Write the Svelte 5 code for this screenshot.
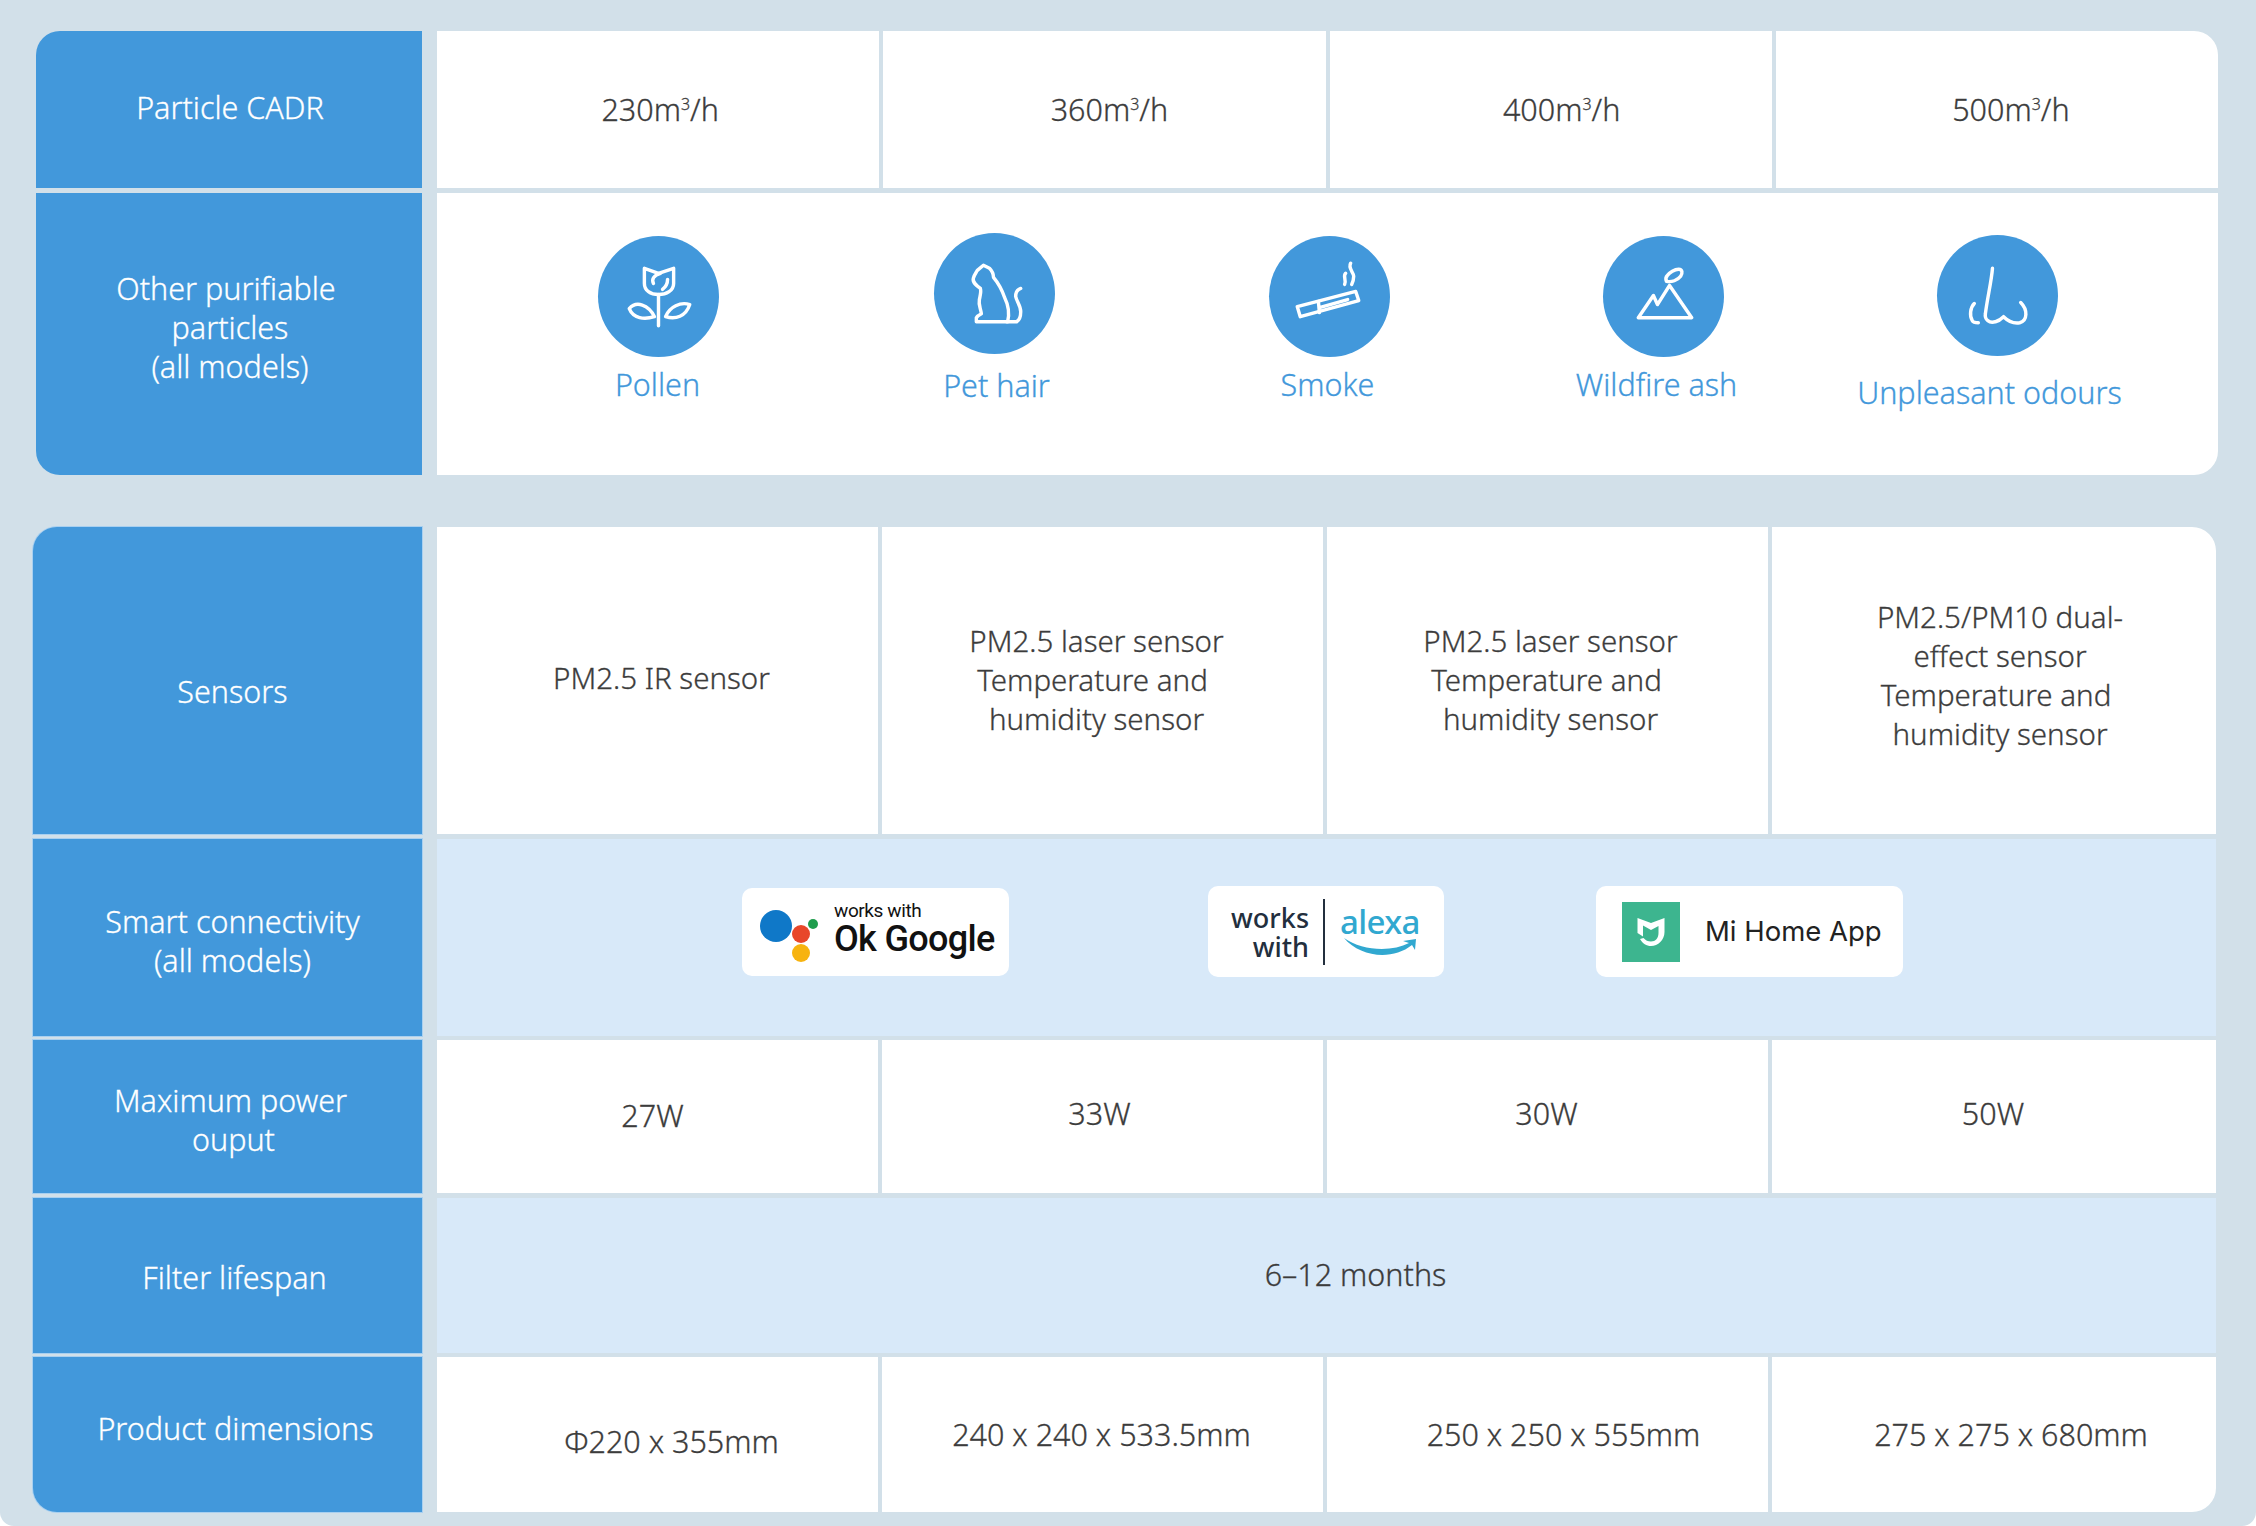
<script>
  // dx / dy keep the slightly uneven text placement of the original comparison chart
  const cadr = [
    { value: '230', dx: 2, dy: 0 },
    { value: '360', dx: 5, dy: 0 },
    { value: '400', dx: 11, dy: 0 },
    { value: '500', dx: 14, dy: 0 },
  ];

  const particles = [
    { name: 'Pollen', icon: 'pollen', iconDx: 0, iconDy: 0, labelDx: -1, labelDy: 0 },
    { name: 'Pet hair', icon: 'cat', iconDx: 3, iconDy: -3, labelDx: 5, labelDy: 1 },
    { name: 'Smoke', icon: 'smoke', iconDx: 5, iconDy: 0, labelDx: 3, labelDy: 0 },
    { name: 'Wildfire ash', icon: 'ash', iconDx: 6, iconDy: 0, labelDx: -1, labelDy: 0 },
    { name: 'Unpleasant odours', icon: 'nose', iconDx: 7, iconDy: -1, labelDx: -1, labelDy: 8 },
  ];

  const sensors = [
    { lines: [['PM2.5 IR sensor', 0]], dx: 4, dy: -3 },
    { lines: [['PM2.5 laser sensor', 0], ['Temperature and', -4], ['humidity sensor', 0]], dx: -6, dy: -1 },
    { lines: [['PM2.5 laser sensor', 2], ['Temperature and', -2], ['humidity sensor', 2]], dx: 1, dy: -1 },
    { lines: [['PM2.5/PM10 dual-', 0], ['effect sensor', 0], ['Temperature and', -4], ['humidity sensor', 0]], dx: 6, dy: -6 },
  ];

  const power = [
    { value: '27W', dx: -5, dy: -1 },
    { value: '33W', dx: -3, dy: -3 },
    { value: '30W', dx: -1, dy: -3 },
    { value: '50W', dx: -1, dy: -3 },
  ];

  const dimensions = [
    { value: 'Φ220 x 355mm', dx: 14, dy: 7 },
    { value: '240 x 240 x 533.5mm', dx: -1, dy: 0 },
    { value: '250 x 250 x 555mm', dx: 16, dy: 0 },
    { value: '275 x 275 x 680mm', dx: 17, dy: 0 },
  ];

  const nudge = (dx, dy) => `translate: ${dx}px ${dy}px`;
</script>

{#snippet rowLabel(lines, dx, dy)}
  <div class="label">
    <div class="text" style={nudge(dx, dy)}>
      {#each lines as [line, lineDx]}
        <span class="line" style={nudge(lineDx, 0)}>{line}</span>
      {/each}
    </div>
  </div>
{/snippet}

{#snippet icon(name)}
  <svg class="glyph" viewBox="0 0 120 120" aria-hidden="true">
    {#if name === 'pollen'}
      <path d="M46 32 L60 37 L75 32 L75 47 C75 54 68 58 60 58 C52 58 46 54 46 47 Z" />
      <path d="M62 37 C55 39 53 43 55 47 M64 53 C68 50 69 47 69 43" />
      <path d="M60 58 V89" />
      <path d="M31 72 C38 64 50 68 56 80 C46 83 35 82 31 72 Z" />
      <path d="M91 68 C82 65 71 70 67 80 C77 83 87 80 91 68 Z" />
    {:else if name === 'cat'}
      <path d="M49 32 L55 35 C58 38 59 41 59 44 C64 50 68 58 70 64 C74 72 75 80 73 88 L42 88 L42 84 C43 82 45 81 47 80 C46 74 44 71 45 66 C46 61 47 58 46 55 C42 52 38 49 39 45 C40 41 42 39 43 37 Z" />
      <path d="M72 88 H82 C85 86 86 82 86 78 C86 72 82 68 81 63 C81 59 83 56 86 55" />
    {:else if name === 'smoke'}
      <path d="M28 70 L86 55 L89 64 L31 80 Z" />
      <path d="M49 65 L50 76 M50 71 L78 63" />
      <path d="M81 27 C78 32 84 36 84 40 C84 43 83 46 82 48" />
      <path d="M76 37 C73 40 77 43 75 48" />
    {:else if name === 'ash'}
      <path d="M66 49 L88 81 L35 81 L50 59 L54 68 Z" />
      <path d="M63 45 C62 43 62 41 64 39 C66 36 71 33 75 33 C79 33 79 37 77 40 C74 44 68 46 63 45 Z" />
    {:else}
      <path d="M55 33 C54 46 50 62 48 78 C47 84 52 88 58 86 C62 85 64 83 66 81 C70 85 76 88 82 87 C90 85 90 74 83 67" />
      <path d="M37 68 C33 72 32 80 35 85 C36 87 39 87 41 87" />
    {/if}
  </svg>
{/snippet}

<main class="page">
  <section class="spec first">
    {@render rowLabel([['Particle CADR', 0]], 1, -2)}
    <div class="cells">
      {#each cadr as c}
        <div class="cell"><div class="text wide" style={nudge(c.dx, c.dy)}>{c.value}m<sup>3</sup>/h</div></div>
      {/each}
    </div>

    {@render rowLabel([['Other purifiable', -4], ['particles', 0], ['(all models)', 0]], 1, -7)}
    <div class="particles">
      {#each particles as p}
        <div class="particle">
          <div class="disc" style={nudge(p.iconDx, p.iconDy)}>{@render icon(p.icon)}</div>
          <span class="pname" style={nudge(p.labelDx, p.labelDy)}>{p.name}</span>
        </div>
      {/each}
    </div>
  </section>

  <section class="spec second">
    {@render rowLabel([['Sensors', 0]], 5, 11)}
    <div class="cells">
      {#each sensors as s}
        <div class="cell">
          <div class="text" style={nudge(s.dx, s.dy)}>
            {#each s.lines as [line, lineDx]}
              <span class="line" style={nudge(lineDx, 0)}>{line}</span>
            {/each}
          </div>
        </div>
      {/each}
    </div>

    {@render rowLabel([['Smart connectivity', 0], ['(all models)', 0]], 5, 4)}
    <div class="cells tinted badges">
      <div class="badge google">
        <svg class="dots" viewBox="0 0 60 60" aria-hidden="true">
          <circle cx="18" cy="22" r="16" fill="#0f78c8" />
          <circle cx="43" cy="30" r="9" fill="#e8472a" />
          <circle cx="43" cy="49" r="9" fill="#f7b30f" />
          <circle cx="55" cy="20" r="5" fill="#1f9d4d" />
        </svg>
        <div class="g-text">
          <span class="g-small">works with</span>
          <span class="g-big">Ok Google</span>
        </div>
      </div>

      <div class="badge alexa">
        <div class="a-works">works<br />with</div>
        <div class="a-rule"></div>
        <div class="a-logo">
          <span class="a-name">alexa</span>
          <svg class="a-smile" viewBox="0 0 76 18" aria-hidden="true">
            <path d="M2 1 C20 14 50 15 67 6 L61 4 L74 2 L73 13 L70 8 C50 24 18 20 2 1 Z" fill="#31a8d0" />
          </svg>
        </div>
      </div>

      <div class="badge mi">
        <svg class="mi-logo" viewBox="0 0 58 60" aria-hidden="true">
          <rect width="58" height="60" fill="#3db58f" />
          <path d="M15.5 16 L29 21 L42.5 16 V30 C42.5 38 36 44 29 44 C24.5 44 20.5 41.5 18 37 L21.5 36 C23.5 38.5 26 39.5 29 39.5 C33.5 39.5 36.5 36 36.5 31 V24 L29 28 L21 23.5 V34.5 L15.5 31 Z" fill="#fff" />
        </svg>
        <span class="mi-name">Mi Home App</span>
      </div>
    </div>

    {@render rowLabel([['Maximum power', 0], ['ouput', 3]], 3, 3)}
    <div class="cells">
      {#each power as c}
        <div class="cell"><div class="text wide" style={nudge(c.dx, c.dy)}>{c.value}</div></div>
      {/each}
    </div>

    {@render rowLabel([['Filter lifespan', 0]], 7, 2)}
    <div class="cells tinted">
      <div class="cell"><div class="text wide" style={nudge(29, -1)}>6–12 months</div></div>
    </div>

    {@render rowLabel([['Product dimensions', 0]], 8, -6)}
    <div class="cells">
      {#each dimensions as c}
        <div class="cell"><div class="text wide" style={nudge(c.dx, c.dy)}>{c.value}</div></div>
      {/each}
    </div>
  </section>
</main>

<style>
  :global(body) {
    margin: 0;
    background: #fff;
  }

  .page {
    height: 1526px;
    box-sizing: border-box;
    padding-top: 31px;
    background: #d2e0e9;
    border-radius: 0 0 14px 14px;
    font-family: "Noto Sans", sans-serif;
    font-size: 29.5px;
    font-weight: 300;
    line-height: 39px;
    color: #3c3c3c;
    display: flex;
    flex-direction: column;
    gap: 52px;
  }

  .spec {
    display: grid;
    column-gap: 15px;
    row-gap: 5px;
  }

  .first {
    width: 2182px;
    margin-left: 36px;
    grid-template-columns: 386px 1781px;
    grid-template-rows: 157px 282px;
  }

  .second {
    width: 2183px;
    margin-left: 33px;
    grid-template-columns: 389px 1779px;
    grid-template-rows: 307px 197px 153px 155px 155px;
    row-gap: 4.5px;
  }

  .label {
    background: #4298db;
    color: #fff;
    font-size: 30.5px;
    display: flex;
    align-items: center;
    justify-content: center;
    text-align: center;
  }

  .second .label { box-shadow: 0 0 0 1px #a9d0f0; }

  .spec > .label:first-child { border-top-left-radius: 24px; }
  .spec > .label:nth-last-child(2) { border-bottom-left-radius: 24px; }
  .spec > .cells:nth-child(2) { border-top-right-radius: 24px; }
  .spec > :last-child { border-bottom-right-radius: 24px; }

  .text {
    text-align: center;
    -webkit-text-stroke: 0.3px currentColor;
  }

  .wide { font-size: 30.5px; }
  .line { display: block; }

  .cells {
    display: grid;
    grid-auto-flow: column;
    grid-auto-columns: 1fr;
    column-gap: 4px;
    overflow: hidden;
  }

  .second .cells:not(.tinted) { grid-template-columns: 441px 441px 441px 1fr; }

  .cell {
    background: #fff;
    display: flex;
    align-items: center;
    justify-content: center;
  }

  .tinted { background: #d8e9f9; }
  .tinted .cell { background: transparent; }

  sup {
    font-size: 16px;
    line-height: 0;
    vertical-align: 11px;
  }

  .particles {
    background: #fff;
    display: grid;
    grid-template-columns: repeat(5, 333px);
    padding: 43px 0 0 55px;
    box-sizing: border-box;
  }

  .particle {
    display: flex;
    flex-direction: column;
    align-items: center;
    gap: 8px;
    font-size: 30.5px;
    color: #4298db;
  }

  .disc {
    width: 121px;
    height: 121px;
    border-radius: 50%;
    background: #4298db;
  }

  .glyph {
    display: block;
    width: 100%;
    height: 100%;
    fill: none;
    stroke: #fff;
    stroke-width: 3.4;
    stroke-linejoin: round;
    stroke-linecap: round;
  }

  .pname {
    white-space: nowrap;
    -webkit-text-stroke: 0.3px currentColor;
  }

  .second .badges {
    display: flex;
    align-items: center;
    column-gap: 0;
    padding-bottom: 11px;
    box-sizing: border-box;
  }

  .badge {
    background: #fff;
    border-radius: 10px;
    box-sizing: border-box;
    display: flex;
    align-items: center;
    color: #111;
  }

  .google {
    width: 267px;
    height: 88px;
    margin-left: 305px;
    padding-left: 16px;
  }

  .dots { width: 60px; height: 60px; flex: none; margin-top: 4px; }

  .g-text {
    margin-left: 16px;
    margin-top: -7px;
    display: flex;
    flex-direction: column;
    font-family: Roboto, sans-serif;
    font-weight: 400;
    color: #111;
  }

  .g-small { font-size: 19px; line-height: 20px; letter-spacing: -0.4px; padding-top: 1px; }

  .g-big {
    font-size: 36px;
    line-height: 36px;
    font-weight: 500;
    letter-spacing: -0.7px;
    white-space: nowrap;
  }

  .alexa {
    width: 236px;
    height: 91px;
    margin-left: 199px;
  }

  .a-works {
    width: 101px;
    text-align: right;
    font-size: 27px;
    line-height: 29px;
    font-weight: 500;
    color: #232f3e;
  }

  .a-rule {
    width: 2px;
    height: 66px;
    margin-left: 14px;
    background: #232f3e;
  }

  .a-logo {
    margin-left: 15px;
    display: flex;
    flex-direction: column;
    align-items: center;
    margin-top: -4px;
  }

  .a-name {
    font-size: 33px;
    line-height: 34px;
    font-weight: 500;
    color: #31a8d0;
    letter-spacing: -0.6px;
  }

  .a-smile { width: 76px; height: 18px; margin-top: -2px; }

  .mi {
    width: 307px;
    height: 91px;
    margin-left: 152px;
    padding-left: 26px;
  }

  .mi-logo { width: 58px; height: 60px; flex: none; }

  .mi-name {
    margin-left: 25px;
    font-family: Inter, sans-serif;
    font-size: 27.5px;
    font-weight: 400;
    color: #222;
    white-space: nowrap;
  }
</style>
